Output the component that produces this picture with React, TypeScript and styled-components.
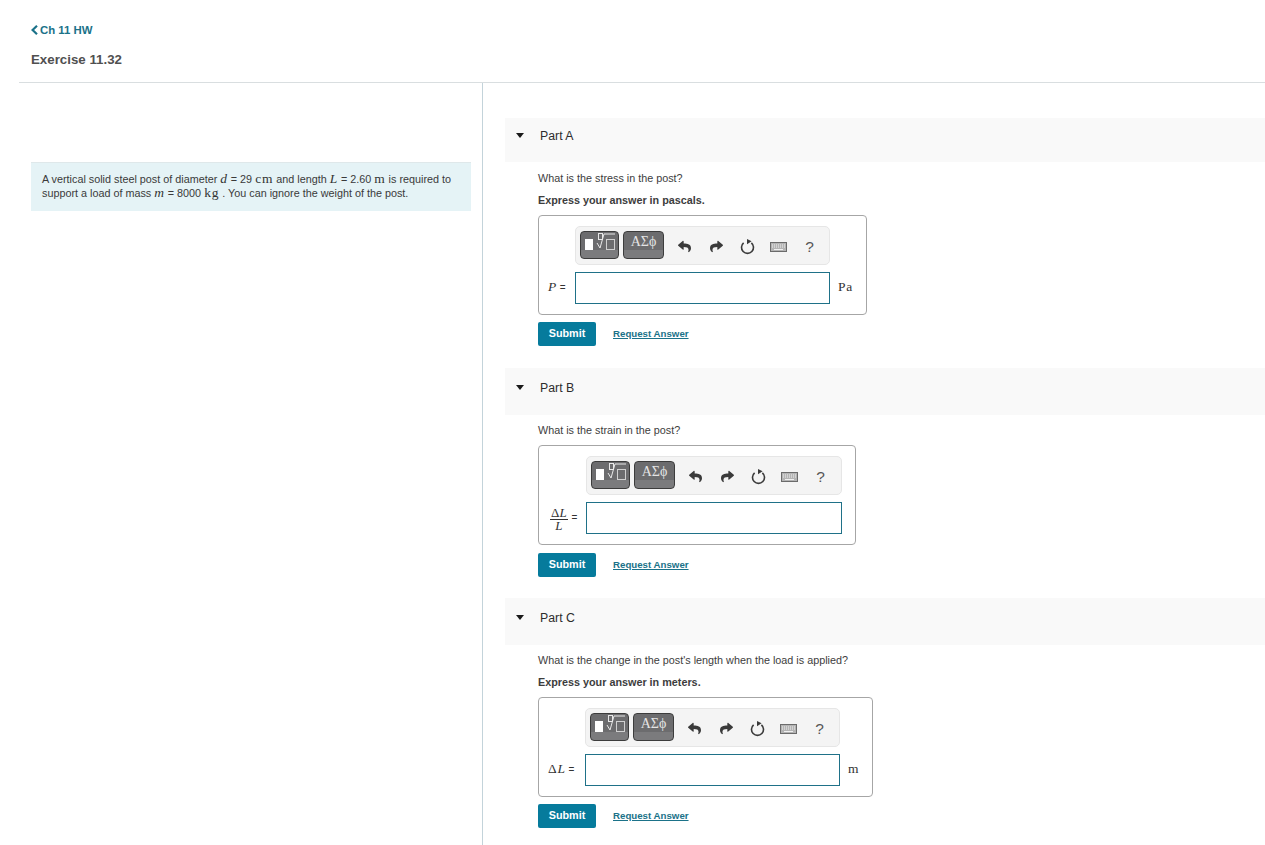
import React from "react";
import styled, { createGlobalStyle } from "styled-components";
import { FaReply, FaShare } from "react-icons/fa";

const GlobalStyle = createGlobalStyle`
  html, body {
    margin: 0;
    padding: 0;
    background: #fff;
    overflow: hidden;
  }
  body {
    font-family: "Liberation Sans", Arial, sans-serif;
    font-size: 10.8px;
    color: #333;
  }
`;

const Page = styled.div`
  height: 845px;
  overflow: hidden;
  display: flex;
  flex-direction: column;
`;

const Header = styled.header`
  height: 83px;
  box-sizing: border-box;
  margin-left: 19px;
  padding: 22px 0 0 12px;
  border-bottom: 1px solid #d9dee0;
`;

const BackLink = styled.a`
  display: flex;
  align-items: center;
  gap: 1px;
  height: 16px;
  color: #1b7289;
  font-size: 11.4px;
  font-weight: bold;
`;

const Title = styled.h1`
  margin: 14px 0 0;
  font-size: 13.3px;
  line-height: 16px;
  font-weight: bold;
  color: #505050;
`;

const Columns = styled.div`
  flex: 1;
  display: flex;
  min-height: 0;
`;

const LeftColumn = styled.aside`
  width: 483px;
  box-sizing: border-box;
  padding: 79px 11px 0 31px;
  border-right: 1px solid #c3d3da;
`;

const Intro = styled.div`
  box-sizing: border-box;
  height: 49px;
  padding: 9px 11px 0;
  background: #e5f3f6;
  border-top: 1px solid #dfe8ea;
  line-height: 14px;
  font-size: 10.8px;
  color: #3a3a3a;
  white-space: nowrap;
`;

const Math = styled.span`
  font-family: "Liberation Serif", "DejaVu Serif", serif;
  font-size: 13.5px;
  letter-spacing: 0.8px;
  line-height: 0;
  color: #333;
`;

const MathVar = styled(Math)`
  font-style: italic;
`;

const RightColumn = styled.main`
  flex: 1;
  padding: 35px 0 0 22px;
`;

const PartHeader = styled.div<{ $height: number; $top: number }>`
  height: ${(p) => p.$height}px;
  box-sizing: border-box;
  display: flex;
  align-items: flex-start;
  padding: ${(p) => p.$top}px 0 0 11px;
  background: #f9f9f9;
  font-size: 12.3px;
  line-height: 16px;
  color: #2d2d2d;
`;

const Caret = styled.span`
  width: 0;
  height: 0;
  margin: 5px 15px 0 0;
  border-left: 4.5px solid transparent;
  border-right: 4.5px solid transparent;
  border-top: 5px solid #1a1a1a;
`;

const PartTitle = styled.span`
  margin-left: 1px;
`;

const PartBody = styled.div<{ $top: number; $bottom: number }>`
  padding: ${(p) => p.$top}px 0 ${(p) => p.$bottom}px 33px;
`;

const Question = styled.p`
  margin: 0;
  line-height: 16px;
  font-size: 10.8px;
  color: #3d3d3d;
`;

const Instruction = styled.p`
  margin: 6px 0 0;
  line-height: 16px;
  font-size: 10.8px;
  font-weight: bold;
  color: #3d3d3d;
`;

const AnswerBox = styled.div<{ $label: number; $field: number; $width: number; $top: number }>`
  box-sizing: border-box;
  width: ${(p) => p.$width}px;
  height: 100px;
  margin-top: ${(p) => p.$top}px;
  padding: 10px 0 0 9px;
  border: 1px solid #a6a6a6;
  border-radius: 4px;
  display: grid;
  grid-template-columns: ${(p) => p.$label}px ${(p) => p.$field}px auto;
  grid-template-rows: 39px 32px;
  row-gap: 7px;
`;

const Toolbar = styled.div`
  grid-column: 2;
  display: flex;
  align-items: flex-start;
  box-sizing: border-box;
  padding: 4px 0 0 4px;
  background: #f4f4f4;
  border: 1px solid #e6e6e6;
  border-radius: 5px;
`;

const TemplateButton = styled.div<{ $width: number }>`
  box-sizing: border-box;
  width: ${(p) => p.$width}px;
  height: 28px;
  margin-right: 4px;
  display: flex;
  justify-content: center;
  border: 1px solid #3c3c3c;
  border-radius: 4px;
  background: linear-gradient(#6c6c6e 0%, #6c6c6e 68%, #7b7b7d 68%, #7b7b7d 100%);
  color: #e4e4e4;
  font-family: "Liberation Serif", serif;
  font-size: 14px;
  line-height: 20px;
`;

const ToolIcon = styled.span<{ $width: number }>`
  width: ${(p) => p.$width}px;
  height: 28px;
  display: flex;
  align-items: center;
  justify-content: center;
  padding-top: 3px;
  box-sizing: border-box;
  color: #3a3a3a;
  font-size: 13px;
`;

const ToolHelp = styled(ToolIcon)`
  font-size: 15.5px;
  color: #555;
`;

const LabelCell = styled.div`
  display: flex;
  align-items: center;
  grid-column: 1;
  padding-bottom: 2px;
  font-size: 10px;
  color: #333;
  white-space: pre;
`;

const AnswerInput = styled.input`
  box-sizing: border-box;
  width: 100%;
  height: 32px;
  padding: 0 6px;
  border: 1px solid #1f7188;
  background: #fff;
  outline: none;
`;

const Unit = styled.div`
  display: flex;
  align-items: center;
  padding: 0 0 2px 8px;
`;

const Fraction = styled.span`
  display: inline-flex;
  flex-direction: column;
  align-items: center;
  font-family: "Liberation Serif", serif;
  font-size: 13px;
  line-height: 11px;
  margin: 3px 4px 0 2px;
`;

const Numerator = styled.span`
  border-bottom: 1px solid #333;
  padding: 0 1px 1px;
`;

const Actions = styled.div<{ $top: number }>`
  display: flex;
  align-items: center;
  gap: 17px;
  margin-top: ${(p) => p.$top}px;
`;

const SubmitButton = styled.button`
  width: 58px;
  height: 24px;
  padding: 0 0 2px;
  border: 0;
  border-radius: 2px;
  background: #067b9c;
  color: #fff;
  font-family: "Liberation Sans", Arial, sans-serif;
  font-size: 10.8px;
  font-weight: bold;
`;

const RequestLink = styled.a`
  color: #1b7289;
  font-size: 9.7px;
  font-weight: bold;
  text-decoration: underline;
  padding-bottom: 2px;
`;

function RootIcon() {
  return (
    <svg width="37" height="26" viewBox="0 0 37 26">
      <rect x="4" y="7" width="8" height="11" fill="#fff" />
      <rect x="17.5" y="1.5" width="4" height="6" fill="none" stroke="#e8e8e8" />
      <path d="M16 11l3 5 4-14h11" fill="none" stroke="#e8e8e8" />
      <rect x="25.5" y="7.5" width="8" height="10" fill="none" stroke="#d0d0d0" />
    </svg>
  );
}

function ResetIcon() {
  return (
    <svg width="15" height="17" viewBox="0 0 15 17">
      <path d="M3.6 4.8a6 6 0 1 0 7.8 0" fill="none" stroke="#3a3a3a" strokeWidth="1.6" />
      <path d="M7 1l4.6 2.2-4.6 3z" fill="#3a3a3a" />
    </svg>
  );
}

function KeyboardIcon() {
  return (
    <svg width="17" height="10" viewBox="0 0 17 10">
      <rect x="0.5" y="0.5" width="16" height="9" fill="#b4b4b4" stroke="#6b6b6b" />
      <path d="M2 3h13M2 5h13" stroke="#f0f0f0" strokeDasharray="1 1" />
      <path d="M4 7.5h9" stroke="#f0f0f0" />
    </svg>
  );
}

function BackChevron() {
  return (
    <svg width="8" height="10" viewBox="0 0 8 10">
      <path d="M6 .8L1.6 5 6 9.2" fill="none" stroke="#1b7289" strokeWidth="2.2" />
    </svg>
  );
}

function MathToolbar() {
  return (
    <Toolbar>
      <TemplateButton $width={39}>
        <RootIcon />
      </TemplateButton>
      <TemplateButton $width={41}>ΑΣϕ</TemplateButton>
      <ToolIcon $width={32}>
        <FaReply />
      </ToolIcon>
      <ToolIcon $width={32}>
        <FaShare />
      </ToolIcon>
      <ToolIcon $width={30}>
        <ResetIcon />
      </ToolIcon>
      <ToolIcon $width={32}>
        <KeyboardIcon />
      </ToolIcon>
      <ToolHelp $width={31}>?</ToolHelp>
    </Toolbar>
  );
}

type PartProps = {
  name: string;
  headerHeight: number;
  headerTop: number;
  bodyTop: number;
  question: string;
  instruction?: string;
  label: React.ReactNode;
  labelWidth: number;
  fieldWidth: number;
  boxWidth: number;
  boxTop: number;
  unit?: string;
  actionsTop: number;
  bottom: number;
};

function Part(props: PartProps) {
  return (
    <section>
      <PartHeader $height={props.headerHeight} $top={props.headerTop}>
        <Caret />
        <PartTitle>{props.name}</PartTitle>
      </PartHeader>
      <PartBody $top={props.bodyTop} $bottom={props.bottom}>
        <Question>{props.question}</Question>
        {props.instruction && <Instruction>{props.instruction}</Instruction>}
        <AnswerBox
          $label={props.labelWidth}
          $field={props.fieldWidth}
          $width={props.boxWidth}
          $top={props.boxTop}
        >
          <MathToolbar />
          <LabelCell>{props.label}</LabelCell>
          <AnswerInput />
          {props.unit && (
            <Unit>
              <Math>{props.unit}</Math>
            </Unit>
          )}
        </AnswerBox>
        <Actions $top={props.actionsTop}>
          <SubmitButton>Submit</SubmitButton>
          <RequestLink>Request Answer</RequestLink>
        </Actions>
      </PartBody>
    </section>
  );
}

export default function App() {
  return (
    <Page>
      <GlobalStyle />
      <Header>
        <BackLink>
          <BackChevron />
          Ch 11 HW
        </BackLink>
        <Title>Exercise 11.32</Title>
      </Header>
      <Columns>
        <LeftColumn>
          <Intro>
            A vertical solid steel post of diameter <MathVar>d</MathVar> = 29 <Math>cm</Math> and
            length <MathVar>L</MathVar> = 2.60 <Math>m</Math> is required to
            <br />
            support a load of mass <MathVar>m</MathVar> = 8000 <Math>kg</Math> . You can ignore the
            weight of the post.
          </Intro>
        </LeftColumn>
        <RightColumn>
          <Part
            name="Part A"
            headerHeight={44}
            headerTop={10}
            bodyTop={8}
            question="What is the stress in the post?"
            instruction="Express your answer in pascals."
            label={
              <>
                <MathVar>P</MathVar> =
              </>
            }
            labelWidth={27}
            fieldWidth={255}
            boxWidth={329}
            boxTop={7}
            unit="Pa"
            actionsTop={7}
            bottom={22}
          />
          <Part
            name="Part B"
            headerHeight={47}
            headerTop={12}
            bodyTop={7}
            question="What is the strain in the post?"
            label={
              <>
                <Fraction>
                  <Numerator>
                    Δ<i>L</i>
                  </Numerator>
                  <i>L</i>
                </Fraction>
                =
              </>
            }
            labelWidth={38}
            fieldWidth={256}
            boxWidth={318}
            boxTop={7}
            actionsTop={8}
            bottom={21}
          />
          <Part
            name="Part C"
            headerHeight={47}
            headerTop={12}
            bodyTop={7}
            question="What is the change in the post's length when the load is applied?"
            instruction="Express your answer in meters."
            label={
              <>
                <Math>Δ</Math>
                <MathVar>L</MathVar> =
              </>
            }
            labelWidth={37}
            fieldWidth={255}
            boxWidth={335}
            boxTop={7}
            unit="m"
            actionsTop={7}
            bottom={0}
          />
        </RightColumn>
      </Columns>
    </Page>
  );
}
